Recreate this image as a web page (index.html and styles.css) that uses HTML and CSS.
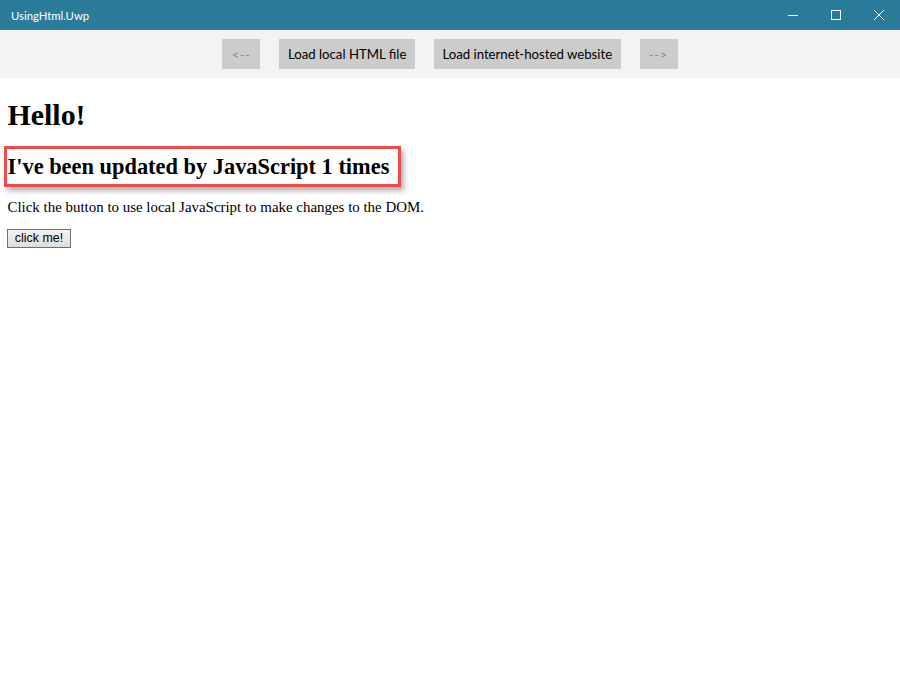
FILE: index.html
```html
<!DOCTYPE html>
<html>
<head>
<meta charset="utf-8">
<title>UsingHtml.Uwp</title>
<link rel="stylesheet" href="styles.css">
</head>
<body>
<div class="window">
  <div class="titlebar">
    <span class="app-title">UsingHtml.Uwp</span>
    <div class="controls">
      <span class="ctl"><svg width="10" height="10" viewBox="0 0 10 10"><path d="M0 5.5H10" stroke="#fff" stroke-width="1"/></svg></span>
      <span class="ctl"><svg width="10" height="10" viewBox="0 0 10 10"><rect x="0.5" y="0.5" width="9" height="9" fill="none" stroke="#fff" stroke-width="1"/></svg></span>
      <span class="ctl"><svg width="10" height="10" viewBox="0 0 10 10"><path d="M0 0L10 10M10 0L0 10" stroke="#fff" stroke-width="1"/></svg></span>
    </div>
  </div>
  <div class="toolbar">
    <button class="tb-btn disabled">&lt;--</button>
    <button class="tb-btn">Load local HTML file</button>
    <button class="tb-btn">Load internet-hosted website</button>
    <button class="tb-btn disabled">--&gt;</button>
  </div>
  <div class="webview">
    <h1>Hello!</h1>
    <h2 class="updated"><span class="highlight"></span><span class="h2-text">I've been updated by JavaScript 1 times</span></h2>
    <p>Click the button to use local JavaScript to make changes to the DOM.</p>
    <button class="click-btn">click me!</button>
  </div>
</div>
</body>
</html>
```

FILE: styles.css
```css
html, body {
  margin: 0;
  padding: 0;
  background: #ffffff;
}
.window {
  width: 900px;
  height: 689px;
  display: flex;
  flex-direction: column;
  overflow: hidden;
}
.titlebar {
  height: 30px;
  background: #2b7b9a;
  display: flex;
  align-items: center;
  justify-content: space-between;
  flex-shrink: 0;
}
.app-title {
  font-family: Lato, "Noto Sans", sans-serif;
  font-size: 11.3px;
  color: #ffffff;
  padding-left: 11px;
}
.controls {
  display: flex;
  height: 30px;
}
.ctl {
  width: 43px;
  height: 30px;
  display: flex;
  align-items: center;
  justify-content: center;
}
.toolbar {
  height: 48px;
  background: #f3f3f3;
  display: flex;
  justify-content: center;
  align-items: flex-start;
  gap: 19px;
  padding-top: 9px;
  box-sizing: border-box;
  flex-shrink: 0;
}
.tb-btn {
  height: 30px;
  margin: 0;
  padding: 0 8.5px 1px;
  border: none;
  background: #cccccc;
  font-family: Lato, "Noto Sans", sans-serif;
  font-size: 13.2px;
  color: #000000;
}
.tb-btn.disabled {
  width: 38px;
  padding: 0;
  color: #858585;
  font-size: 12px;
  letter-spacing: 1px;
}
.webview {
  flex: 1;
  padding: 0 7.5px;
  font-family: "Liberation Serif", "Times New Roman", serif;
  color: #000;
}
h1 {
  font-size: 29.9px;
  margin: 19.6px 0 22px;
}
h2.updated {
  position: relative;
  font-size: 22.4px;
  margin: 0 0 19px;
  display: inline-block;
}
.highlight {
  position: absolute;
  left: -3.5px;
  right: -11.5px;
  top: -8px;
  bottom: -7.5px;
  border: 3px solid #f04b4b;
  box-shadow: 3px 4px 5px rgba(0, 0, 0, 0.3);
  background: #ffffff;
}
.h2-text {
  position: relative;
}
p {
  font-size: 14.93px;
  margin: 0 0 12.5px;
}
.click-btn {
  font-family: "Liberation Sans", Arial, sans-serif;
  font-size: 12.44px;
  width: 64px;
  height: 19px;
  padding: 0;
  margin: 0 0 0 -0.5px;
  border: 1px solid #707070;
  background: linear-gradient(#f2f2f2, #dddddd);
  color: #000;
}
```
